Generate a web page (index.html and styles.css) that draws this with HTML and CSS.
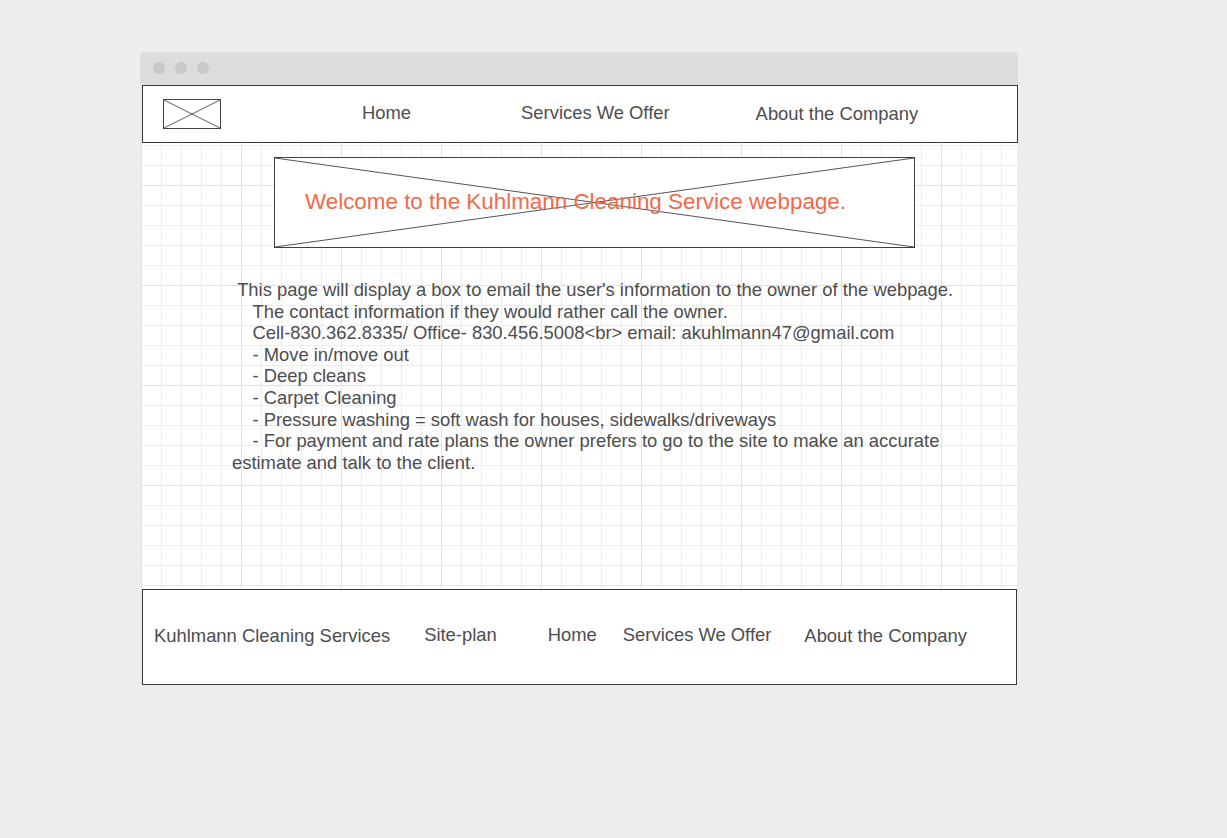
FILE: index.html
```html
<!DOCTYPE html>
<html lang="en">
<head>
<meta charset="utf-8">
<title>Kuhlmann Cleaning Service</title>
<link rel="stylesheet" href="styles.css">
</head>
<body>
<div class="window">
  <div class="titlebar">
    <span class="dot"></span><span class="dot"></span><span class="dot"></span>
  </div>
  <div class="canvas">
    <header class="topbar">
      <div class="logo">
        <svg width="58" height="30" viewBox="0 0 58 30" preserveAspectRatio="none"><line x1="0" y1="0" x2="58" y2="30"/><line x1="0" y1="30" x2="58" y2="0"/></svg>
      </div>
      <nav class="nav">
        <a class="nav-link nav-home">Home</a>
        <a class="nav-link nav-services">Services We Offer</a>
        <a class="nav-link nav-about">About the Company</a>
      </nav>
    </header>
    <section class="hero">
      <svg class="hero-x" viewBox="0 0 100 100" preserveAspectRatio="none"><line x1="0" y1="0" x2="100" y2="100" vector-effect="non-scaling-stroke"/><line x1="0" y1="100" x2="100" y2="0" vector-effect="non-scaling-stroke"/></svg>
      <h1 class="hero-title">Welcome to the Kuhlmann Cleaning Service webpage.</h1>
    </section>
    <p class="intro"> This page will display a box to email the user's information to the owner of the webpage.
    The contact information if they would rather call the owner.
    Cell-830.362.8335/ Office- 830.456.5008&lt;br&gt; email: akuhlmann47@gmail.com
    - Move in/move out
    - Deep cleans
    - Carpet Cleaning
    - Pressure washing = soft wash for houses, sidewalks/driveways
    - For payment and rate plans the owner prefers to go to the site to make an accurate
estimate and talk to the client.</p>
    <footer class="footer">
      <span class="foot-item foot-brand">Kuhlmann Cleaning Services</span>
      <span class="foot-item foot-plan">Site-plan</span>
      <span class="foot-item foot-home">Home</span>
      <span class="foot-item foot-services">Services We Offer</span>
      <span class="foot-item foot-about">About the Company</span>
    </footer>
  </div>
</div>
</body>
</html>
```
FILE: styles.css
```css
* { box-sizing: border-box; }
html, body { margin: 0; padding: 0; }
body {
  background: #ededed;
  font-family: "Liberation Sans", Arial, sans-serif;
  color: #4d4d4d;
  width: 1227px;
  height: 838px;
  overflow: hidden;
}
.window {
  margin: 52px 0 0 140px;
  width: 878px;
}
.titlebar {
  height: 33px;
  background: #dcdcdc;
  border-radius: 5px 5px 0 0;
  display: flex;
  align-items: center;
  gap: 10px;
  padding: 0 0 1px 13px;
}
.dot {
  width: 12px;
  height: 12px;
  border-radius: 50%;
  background: #c9c9c9;
}
.canvas {
  margin-left: 1px;
  width: 876px;
  height: 600px;
  display: flex;
  flex-direction: column;
  background-color: #fff;
  background-image:
    linear-gradient(to right, #e2e2e2 1px, transparent 1px),
    linear-gradient(to bottom, #e2e2e2 1px, transparent 1px),
    linear-gradient(to right, #eeeeee 1px, transparent 1px),
    linear-gradient(to bottom, #eeeeee 1px, transparent 1px);
  background-size: 100px 100px, 100px 100px, 20px 20px, 20px 20px;
}
.topbar {
  margin-left: 1px;
  width: 876px;
  height: 58px;
  flex: none;
  background: #fff;
  border: 1px solid #3a3a3a;
  display: flex;
  align-items: center;
  padding-left: 20px;
}
.logo {
  width: 58px;
  height: 30px;
  border: 1px solid #444;
  display: flex;
}
.logo svg { width: 100%; height: 100%; }
.logo line, .hero-x line { stroke: #555; stroke-width: 1; }
.nav {
  display: flex;
  align-items: center;
}
.nav-link {
  font-size: 18.4px;
  color: #4d4d4d;
  text-decoration: none;
}
.nav-home { margin-left: 141px; margin-top: -2px; }
.nav-services { margin-left: 110px; margin-top: -2px; }
.nav-about { margin-left: 86px; }
.hero {
  position: relative;
  margin: 14px 0 0 133px;
  width: 641px;
  height: 91px;
  flex: none;
  background: #fff;
  border: 1px solid #3f3f3f;
  display: flex;
  align-items: center;
  padding-bottom: 2px;
}
.hero-x {
  position: absolute;
  inset: 0;
  width: 100%;
  height: 100%;
}
.hero-title {
  position: relative;
  margin: 0 0 0 30px;
  font-weight: normal;
  font-size: 22.4px;
  color: #f2694b;
}
.intro {
  margin: 31px 0 0 91px;
  width: 730px;
  white-space: pre-wrap;
  font-size: 18.4px;
  line-height: 21.6px;
  color: #4d4d4d;
}
.footer {
  margin: auto 0 0 1px;
  width: 875px;
  height: 96px;
  flex: none;
  background: #fff;
  border: 1px solid #3a3a3a;
  display: flex;
  align-items: center;
  padding: 0 0 3px 11px;
  font-size: 18.4px;
}
.foot-plan { margin-left: 34px; margin-top: -2px; }
.foot-home { margin-left: 51px; margin-top: -2px; }
.foot-services { margin-left: 26px; margin-top: -2px; }
.foot-about { margin-left: 33px; }
```
